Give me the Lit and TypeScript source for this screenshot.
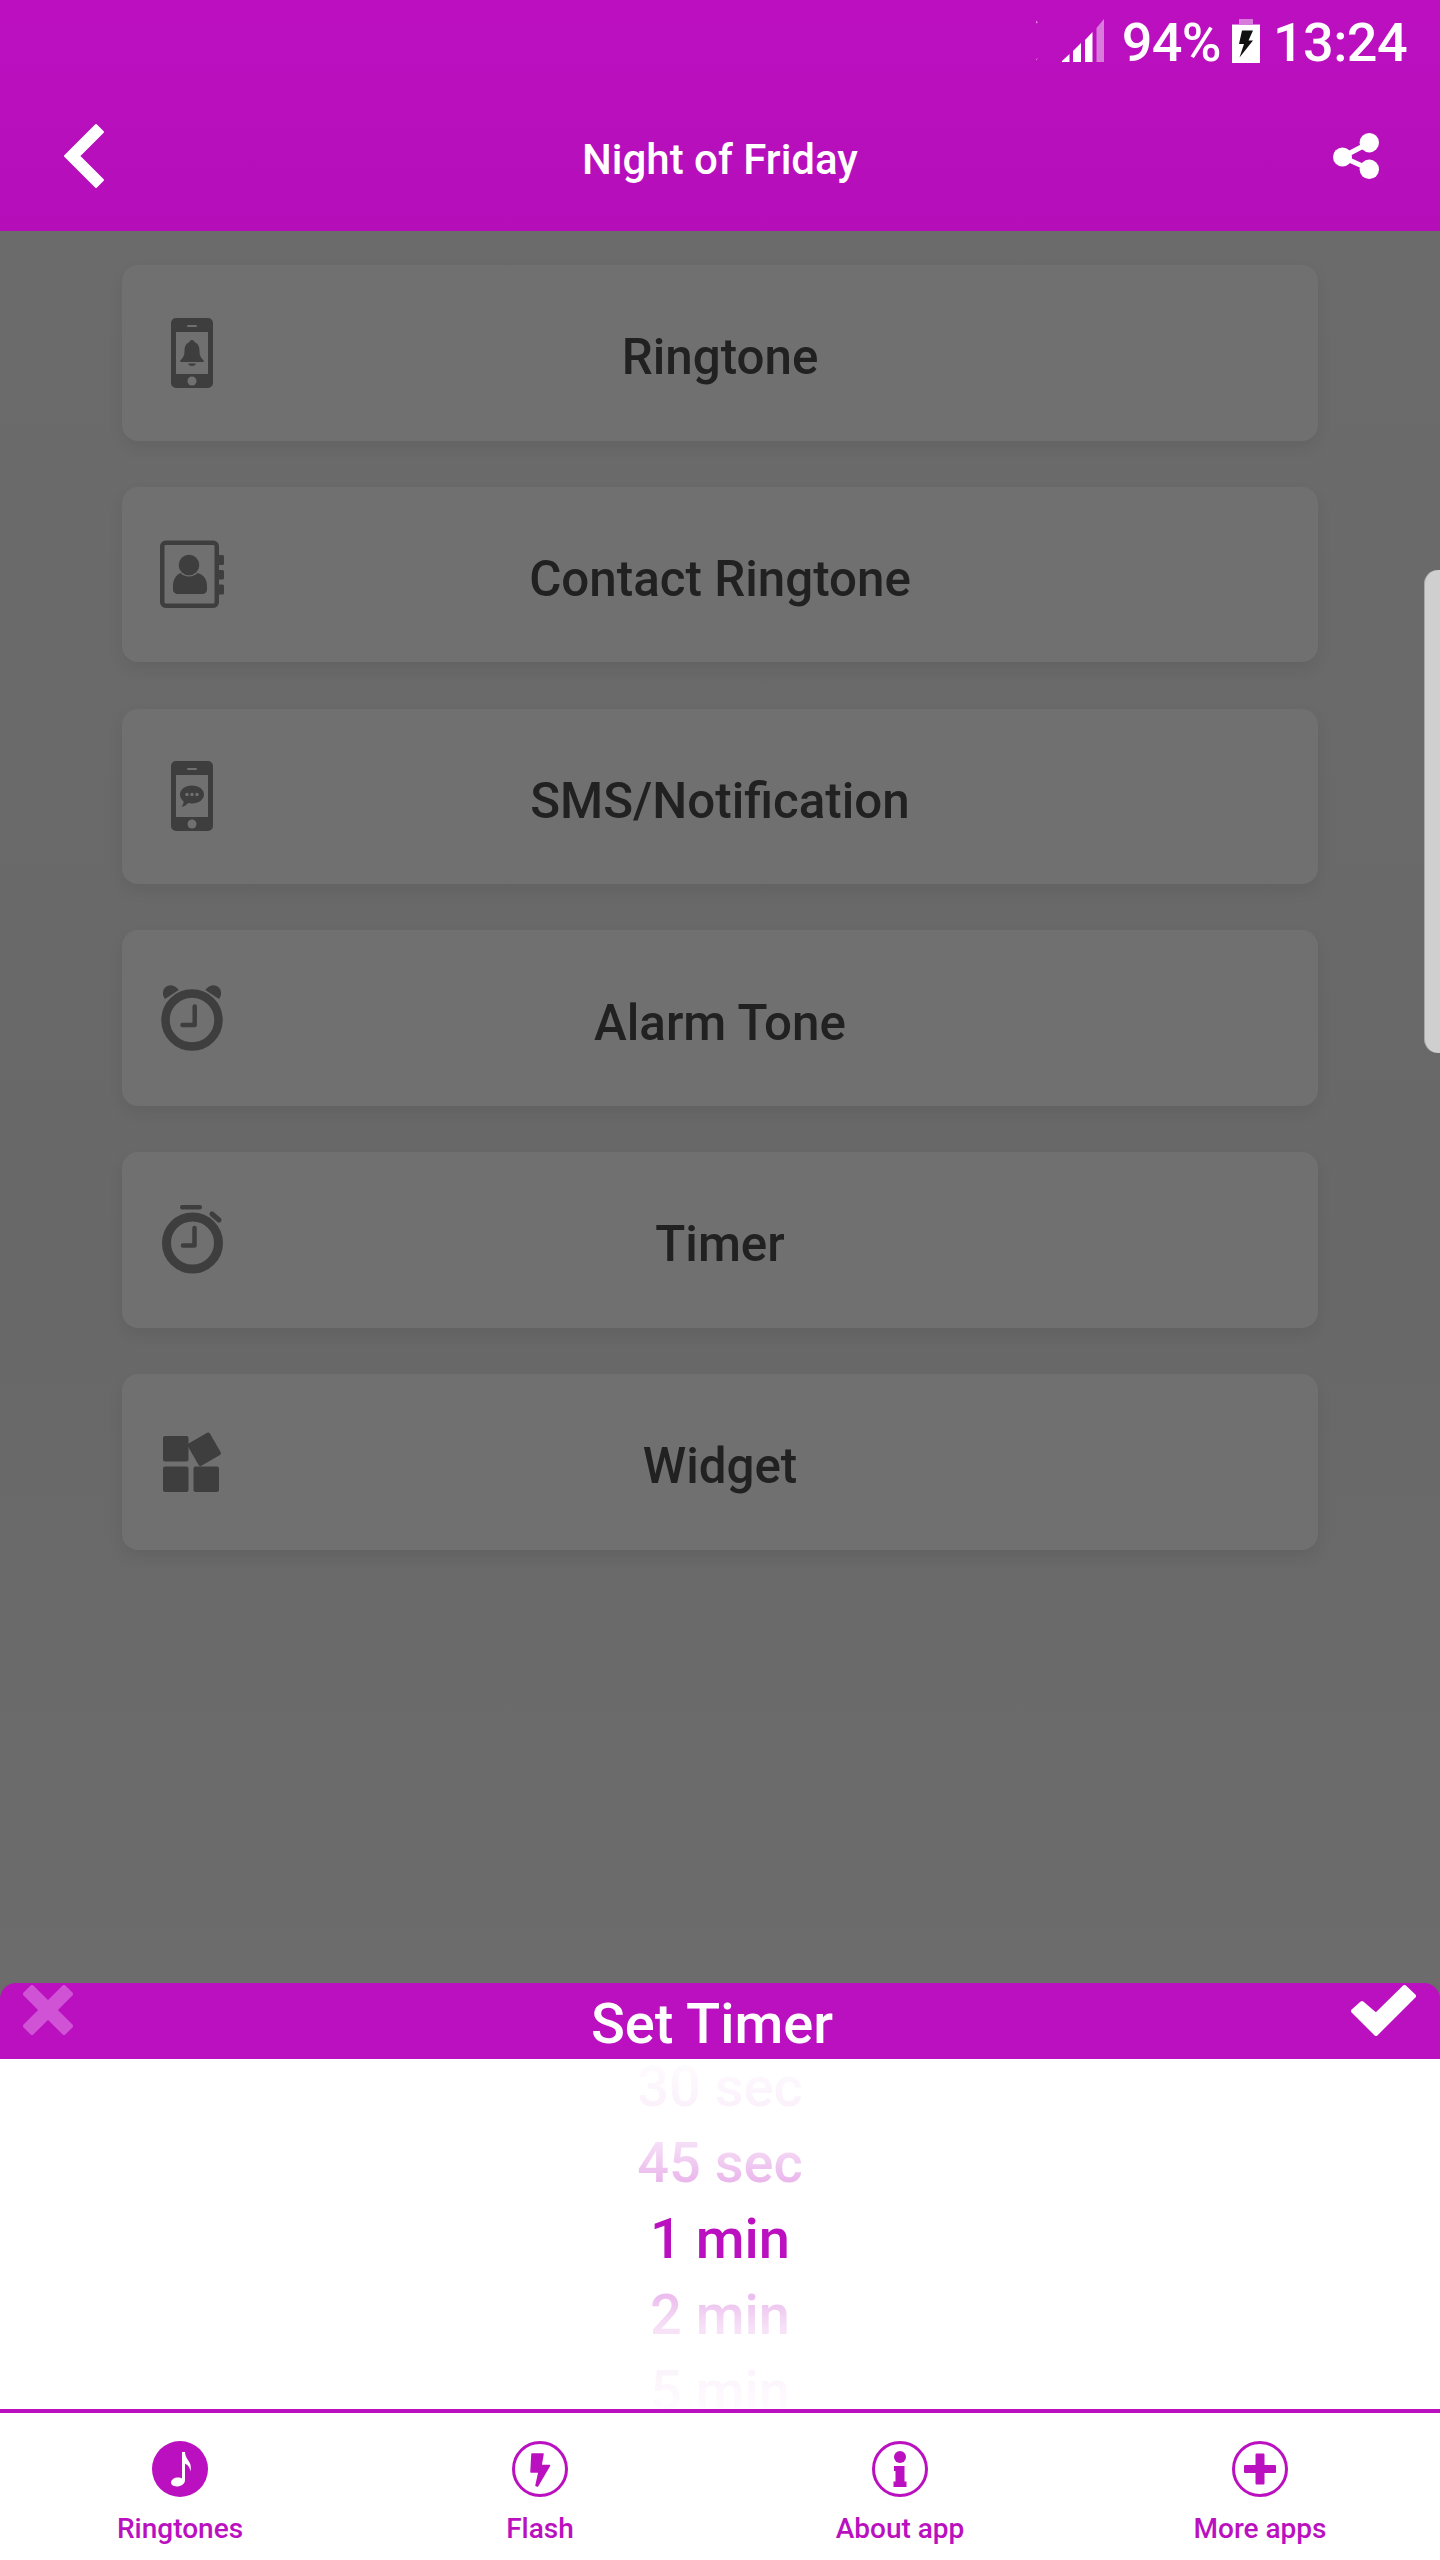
import { LitElement, html, css, svg } from "lit";
import { customElement } from "lit/decorators.js";

const phoneBase = svg`<path fill-rule="evenodd" d="M19 0h32a5 5 0 0 1 5 5v60a5 5 0 0 1-5 5H19a5 5 0 0 1-5-5V5a5 5 0 0 1 5-5zM19 14v42h32V14z"/>
<circle cx="35" cy="63" r="4.5" fill="#707070"/><rect x="30" y="7" width="10" height="2" rx="1" fill="#707070"/>`;

const icons = {
  bell: svg`${phoneBase}<path d="M35 22c1.6 0 2.4 1 2.5 2.2 4 1.2 5 5 5 9 0 4.500 1.500 6.500 4.500 9.800l-.6 1H23.600l-.6-1c3-3.300 4.500-5.300 4.500-9.800 0-4 1-7.800 5-9 .1-1.200.9-2.200 2.500-2.200zM31 45.500h8c-.5 1.500-2 2.500-4 2.500s-3.500-1-4-2.500z"/>`,
  contact: svg`<rect x="5.250" y="2.700" width="54.500" height="63" rx="3.500" fill="none" stroke="currentColor" stroke-width="4.500"/>
    <rect x="61" y="15" width="6" height="10" rx="1.500"/><rect x="61" y="30" width="6" height="9.500" rx="1.500"/><rect x="61" y="44.500" width="6" height="10" rx="1.500"/>
    <circle cx="32" cy="25" r="10.300"/>
    <path d="M23.500 33c2 2.200 5 3.500 8.500 3.500s6.500-1.300 8.500-3.500c6 1.500 9.500 6 9.500 13v3.500c0 2.800-2 4.500-4.500 4.500H21c-2.800 0-5-1.700-5-4.500V46c0-7 3.500-11.500 7.500-13z"/>`,
  sms: svg`${phoneBase}<path d="M35 24.500c6.700 0 12 3.900 12 9 0 5-5.300 9-12 9-1.300 0-2.600-.2-3.800-.5-2 2.300-4.400 3.700-6.700 4 1.200-1.500 2-3.300 2.200-5.600-2.300-1.600-3.700-4.200-3.700-6.900 0-5.100 5.300-9 12-9z"/>
    <circle cx="30" cy="33.500" r="1.700" fill="#707070"/><circle cx="35" cy="33.500" r="1.700" fill="#707070"/><circle cx="40" cy="33.500" r="1.700" fill="#707070"/>`,
  alarm: svg`<circle cx="35" cy="37" r="26.500" fill="none" stroke="currentColor" stroke-width="8.500"/>
    <path d="M37.700 23.500V42H25.500" fill="none" stroke="currentColor" stroke-width="4.500" stroke-linecap="round" stroke-linejoin="round"/>
    <path d="M8 16C4 11.500 5.500 2.500 14 2.300c3 0 6 2.200 7.700 4.700z"/><path d="M62 16C66 11.500 64.500 2.500 56 2.300c-3 0-6 2.200-7.700 4.700z"/>`,
  timer: svg`<circle cx="35.500" cy="38" r="26" fill="none" stroke="currentColor" stroke-width="9"/>
    <path d="M37.500 23v17.500H26" fill="none" stroke="currentColor" stroke-width="4.500" stroke-linecap="round" stroke-linejoin="round"/>
    <rect x="23" y="0" width="22" height="4.500" rx="2.250"/>
    <path d="M55 9l7 6" stroke="currentColor" stroke-width="5" stroke-linecap="round"/>`,
  widget: svg`<rect x="6" y="9" width="25.500" height="25.500" rx="2"/><rect x="6" y="39.500" width="25.500" height="25.500" rx="2"/><rect x="36.500" y="39.500" width="25.500" height="25.500" rx="2"/>
    <rect x="34.500" y="9.500" width="25.500" height="25.500" rx="2" transform="rotate(-30 47.200 22.200)"/>`,
};

const rows: [string, keyof typeof icons][] = [
  ["Ringtone", "bell"],
  ["Contact Ringtone", "contact"],
  ["SMS/Notification", "sms"],
  ["Alarm Tone", "alarm"],
  ["Timer", "timer"],
  ["Widget", "widget"],
];

const navIcons = [
  svg`<circle cx="28" cy="28" r="28"/><path fill="#fff" d="M30 11h3c.3 5 2.500 7 4.500 10.500 1.500 2.700 1.700 6 .8 9-.2-3.500-1.600-6.300-5.300-7.800V39c0 4-4 6.500-8.500 6.500-3.300 0-5.500-1.600-5.500-3.900 0-3 3.300-5.100 7-5.100 1.600 0 3 .4 4 1z"/>`,
  svg`<circle cx="28" cy="28" r="26.500" fill="none" stroke="currentColor" stroke-width="3"/><path stroke="currentColor" stroke-width="1.500" stroke-linejoin="round" d="M20 13h11l-2 11.500h8.500L25.500 45l-1.500-.5 3-13.500h-8z"/>`,
  svg`<circle cx="28" cy="28" r="26.500" fill="none" stroke="currentColor" stroke-width="3"/><circle cx="28" cy="16" r="6"/><path d="M22 25h10.500v15.500H34.500V46H21.500v-5.500H23.500V30H22z"/>`,
  svg`<circle cx="28" cy="28" r="26.500" fill="none" stroke="currentColor" stroke-width="3"/><path d="M23.500 13.500a1 1 0 0 1 1-1h7a1 1 0 0 1 1 1V24h10.500a1 1 0 0 1 1 1v6a1 1 0 0 1-1 1H32.500v10.500a1 1 0 0 1-1 1h-7a1 1 0 0 1-1-1V32H13a1 1 0 0 1-1-1v-6a1 1 0 0 1 1-1h10.500z"/>`,
];
const navLabels = ["Ringtones", "Flash", "About app", "More apps"];

@customElement("app-root")
export class AppRoot extends LitElement {
  static styles = css`
    :host {
      display: flex;
      flex-direction: column;
      position: relative;
      width: 1440px;
      height: 2560px;
      overflow: hidden;
      background: #6b6b6b;
      font-family: Roboto, "Liberation Sans", sans-serif;
    }
    svg { display: block; }
    .top {
      height: 231px;
      flex: none;
      box-sizing: border-box;
      background: linear-gradient(#bc10c0, #b50eb9);
      color: #fff;
    }
    .status {
      height: 82px;
      display: flex;
      align-items: flex-start;
      justify-content: flex-end;
      padding-right: 33px;
      font-size: 54px;
      font-weight: 500;
      line-height: 85px;
      letter-spacing: -0.6px;
    }
    .signal { margin: 19px 17px 0 0; }
    .battery { margin: 19px 13px 0 11px; }
    .bar {
      display: grid;
      grid-template-columns: 1fr auto 1fr;
      align-items: center;
      height: 149px;
    }
    .back { margin: -1px 0 0 63px; }
    .title {
      font-size: 42px;
      font-weight: 500;
      line-height: 48px;
      margin-top: 7px;
    }
    .share { justify-self: end; margin: -1px 61px 0 0; }
    .content {
      flex: 1;
      display: flex;
      flex-direction: column;
      gap: 46.2px;
      padding: 34px 122px 0;
      background: linear-gradient(#6b6b6b, #686868 60%, #6c6c6c);
    }
    .card {
      height: 175.6px;
      flex: none;
      display: grid;
      grid-template-columns: 1fr auto 1fr;
      align-items: center;
      background: #707070;
      border-radius: 16px;
      box-shadow: 0 7px 16px rgba(0, 0, 0, 0.07);
    }
    .card svg { margin-left: 35px; color: #3e3e3e; fill: currentColor; }
    .label {
      font-size: 49.3px;
      font-weight: 500;
      line-height: 56px;
      color: #212121;
      margin-top: 9px;
    }
    .handle {
      position: absolute;
      right: 0;
      top: 570px;
      width: 16px;
      height: 483px;
      background: #cfcfcf;
      border-radius: 14px 0 0 14px;
      border-left: 1px solid #a8a8a8;
      box-sizing: border-box;
    }
    .sheet-head {
      height: 76px;
      flex: none;
      display: flex;
      justify-content: space-between;
      align-items: flex-start;
      box-sizing: border-box;
      padding: 2px 24px 0 23px;
      background: #ba10bf;
      border-radius: 16px 16px 0 0;
      color: #fff;
    }
    .sheet-title { font-size: 56px; font-weight: 500; line-height: 76px; margin-top: 1px; }
    .picker {
      position: relative;
      height: 354px;
      box-sizing: border-box;
      flex: none;
      overflow: hidden;
      background: #fff;
      border-bottom: 4px solid #ba10bf;
    }
    .wheel { margin-top: -10px; text-align: center; }
    .item {
      height: 76px;
      line-height: 76px;
      font-size: 56px;
      font-weight: 500;
      color: #ba10bf;
    }
    .fade {
      position: absolute;
      left: 0;
      right: 0;
      height: 138px;
    }
    .fade.up {
      top: 0;
      background: linear-gradient(rgba(255, 255, 255, 0.99), rgba(255, 255, 255, 0.94) 34%, rgba(255, 255, 255, 0.87) 60%, rgba(255, 255, 255, 0.68) 92%, rgba(255, 255, 255, 0.6));
    }
    .fade.down {
      bottom: 0;
      height: 137px;
      background: linear-gradient(rgba(255, 255, 255, 0.6), rgba(255, 255, 255, 0.68) 10%, rgba(255, 255, 255, 0.87) 40%, rgba(255, 255, 255, 0.95) 70%, rgba(255, 255, 255, 0.99));
    }
    .nav {
      height: 147px;
      flex: none;
      display: grid;
      grid-template-columns: repeat(4, 1fr);
      background: #fff;
      color: #ba10bf;
    }
    .tab {
      display: flex;
      flex-direction: column;
      align-items: center;
      padding-top: 28px;
    }
    .tab svg { fill: currentColor; }
    .tab span { font-size: 28px; font-weight: 500; line-height: 34px; margin-top: 15px; }
  `;

  render() {
    return html`
      <header class="top">
        <div class="status">
          <svg class="signal" width="70" height="44" viewBox="0 0 70 44" fill="#fff">
            <path d="M1 1.500l2 2-2 1zM1 41.500l2-2.500-2 1z" opacity=".5"/>
            <path d="M27 43h7.500v-8L27 42zM38 43h8V24l-8 8zM50 43h7.500V13L50 21z"/>
            <path d="M61.500 43H69V0l-7.500 9z" opacity=".45"/>
          </svg>
          <span>94%</span>
          <svg class="battery" width="28" height="44" viewBox="0 0 28 44">
            <path d="M7 0h14v5h7v1H0V5h7z" fill="#fff" opacity=".45"/>
            <path d="M0 6h28v38H0z" fill="#fff"/>
            <path d="M10 11.500h11l-4.500 10H21L7.500 38.500l4.500-13.500H7z" fill="#111"/>
          </svg>
          <span>13:24</span>
        </div>
        <div class="bar">
          <svg class="back" width="42" height="66" viewBox="0 0 42 66" fill="#fff" stroke="#fff" stroke-width="2" stroke-linejoin="round"><path d="M2 33L33 2l7 7-24 24 24 24-7 7z"/></svg>
          <div class="title">Night of Friday</div>
          <svg class="share" width="46" height="46" viewBox="0 0 46 46" fill="#fff"><circle cx="9.500" cy="24" r="9.500"/><circle cx="36.300" cy="9.700" r="9.700"/><circle cx="36.300" cy="36.300" r="9.700"/><path d="M9.500 24L36 10M9.500 24L36 36" stroke="#fff" stroke-width="5"/></svg>
        </div>
      </header>
      <main class="content">
        ${rows.map(
          ([text, icon]) => html`<div class="card">
            <svg width="70" height="70" viewBox="0 0 70 70">${icons[icon]}</svg>
            <div class="label">${text}</div>
          </div>`
        )}
      </main>
      <div class="handle"></div>
      <div class="sheet-head">
        <svg width="50" height="50" viewBox="0 0 50 50" fill="#d052d5" stroke="#d052d5" stroke-width="4" stroke-linejoin="round"><path d="M9 2l16 16L41 2l7 7-16 16 16 16-7 7-16-16L9 48l-7-7 16-16L2 9z"/></svg>
        <div class="sheet-title">Set Timer</div>
        <svg width="65" height="51" viewBox="0 0 65 51" fill="#fff" stroke="#fff" stroke-width="4" stroke-linejoin="round"><path d="M53.500 2L63 11 25 49 2 26l9-8 14 12z"/></svg>
      </div>
      <div class="picker">
        <div class="wheel">
          <div class="item">30 sec</div>
          <div class="item">45 sec</div>
          <div class="item">1 min</div>
          <div class="item">2 min</div>
          <div class="item">5 min</div>
        </div>
        <div class="fade up"></div>
        <div class="fade down"></div>
      </div>
      <nav class="nav">
        ${navLabels.map(
          (label, i) => html`<div class="tab">
            <svg width="56" height="56" viewBox="0 0 56 56">${navIcons[i]}</svg>
            <span>${label}</span>
          </div>`
        )}
      </nav>
    `;
  }
}
